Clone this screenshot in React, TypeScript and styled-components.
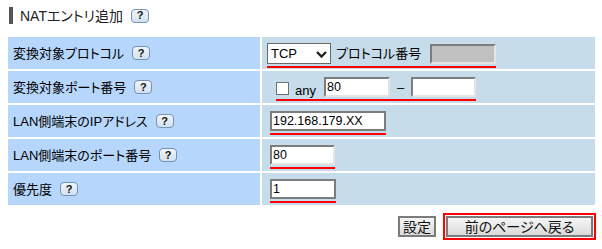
import React from 'react';
import styled, { createGlobalStyle } from 'styled-components';

const GlobalStyle = createGlobalStyle`
  body {
    margin: 0;
    background: #fff;
    color: #000;
    font-family: "Liberation Sans", "Noto Sans CJK JP", sans-serif;
    font-feature-settings: "palt";
  }
`;

const Page = styled.div`
  width: 588px;
  padding: 7px 0 0 8px;
`;

const Title = styled.h2`
  display: flex;
  align-items: center;
  gap: 8px;
  height: 17px;
  margin: 0 0 13px 1px;
  padding-left: 7px;
  border-left: 4px solid #555;
  font-size: 14px;
  font-weight: normal;
  color: #222;
  line-height: 1;
`;

const Help = styled.span`
  display: inline-flex;
  align-items: center;
  justify-content: center;
  box-sizing: border-box;
  width: 18px;
  height: 14px;
  border: 1px solid #7693b6;
  border-radius: 4px;
  background: linear-gradient(#f0f5fa, #d3e1ef);
  font: bold 11px "Liberation Sans", sans-serif;
  color: #111;
  line-height: 1;
`;

const Form = styled.div`
  display: grid;
  grid-template-columns: 252px 1fr;
  grid-auto-rows: 32px;
  gap: 2px;
  width: 587px;
`;

const LabelCell = styled.div`
  display: flex;
  align-items: center;
  gap: 8px;
  padding-left: 5px;
  background: #b6d6fb;
  font-size: 13px;
  line-height: 1;
`;

const ValueCell = styled.div`
  display: flex;
  align-items: flex-start;
  padding: 6px 0 0 5px;
  background: #c7dcea;
  font-size: 13px;
`;

const Mark = styled.div<{ $indent?: number }>`
  display: inline-flex;
  align-items: center;
  padding-bottom: 2px;
  margin-left: ${p => p.$indent ?? 0}px;
  border-bottom: 2px solid #f00;
`;

const SelectWrap = styled.div`
  position: relative;
  width: 64px;
  height: 21px;
`;

const Select = styled.select`
  appearance: none;
  box-sizing: border-box;
  width: 100%;
  height: 100%;
  margin: 0;
  padding: 0 0 0 3px;
  border: 1px solid #6a6a6a;
  border-radius: 0;
  background: #fff;
  font: 13px "Liberation Sans", sans-serif;
  color: #000;
`;

const Chevron = styled.svg`
  position: absolute;
  right: 4px;
  top: 8px;
  pointer-events: none;
`;

const Field = styled.input<{ $w: number; $look?: 'inset' | 'solid' | 'off' }>`
  box-sizing: border-box;
  width: ${p => p.$w}px;
  height: 20px;
  margin: 0;
  padding: 0 1px;
  font: 12.5px "Liberation Sans", sans-serif;
  color: #000;
  background: ${p => (p.$look === 'off' ? '#c0c0c0' : '#fff')};
  border: 2px solid #7d7d7d;
  ${p =>
    p.$look !== 'solid' &&
    `border-right-color: #e4e4e4; border-bottom-color: #e4e4e4;`}
  outline: none;
`;

const Text = styled.span<{ $gap?: number }>`
  margin: 0 ${p => p.$gap ?? 0}px;
  line-height: 1;
`;

const Box = styled.span`
  box-sizing: border-box;
  width: 13px;
  height: 13px;
  margin-top: 3px;
  border: 1px solid #707070;
  background: #fff;
`;

const Any = styled.span`
  margin: 6px 8px 0 6px;
  line-height: 1;
`;

const Buttons = styled.div`
  display: flex;
  justify-content: flex-end;
  align-items: center;
  gap: 7px;
  margin-top: 8px;
`;

const Button = styled.button<{ $w: number }>`
  box-sizing: border-box;
  width: ${p => p.$w}px;
  height: 21px;
  padding: 0;
  border: 2px solid #7b7b7b;
  background: linear-gradient(#f6f6f6, #dadada);
  font: 14px "Liberation Sans", "Noto Sans CJK JP", sans-serif;
  font-feature-settings: "palt";
  color: #111;
  line-height: 1;
`;

const RedFrame = styled.div`
  display: flex;
  padding: 1px;
  border: 2px solid #f00;
`;

const Label: React.FC<{ text: string }> = ({ text }) => (
  <LabelCell>
    {text}
    <Help>?</Help>
  </LabelCell>
);

export default function App() {
  return (
    <Page>
      <GlobalStyle />
      <Title>
        NATエントリ追加
        <Help>?</Help>
      </Title>
      <Form>
        <Label text="変換対象プロトコル" />
        <ValueCell>
          <Mark>
            <SelectWrap>
              <Select defaultValue="TCP">
                <option>TCP</option>
                <option>UDP</option>
              </Select>
              <Chevron width="11" height="7" viewBox="0 0 11 7">
                <path d="M1 1 L5.5 5.5 L10 1" fill="none" stroke="#222" strokeWidth="2.4" />
              </Chevron>
            </SelectWrap>
            <Text $gap={5}>プロトコル番号</Text>
            <Field $w={66} $look="off" disabled style={{ marginLeft: 4 }} />
          </Mark>
        </ValueCell>

        <Label text="変換対象ポート番号" />
        <ValueCell>
          <Mark $indent={9}>
            <Box />
            <Any>any</Any>
            <Field $w={66} defaultValue="80" />
            <Text $gap={7}>–</Text>
            <Field $w={65} />
          </Mark>
        </ValueCell>

        <Label text="LAN側端末のIPアドレス" />
        <ValueCell>
          <Mark $indent={3}>
            <Field $w={116} $look="solid" defaultValue="192.168.179.XX" />
          </Mark>
        </ValueCell>

        <Label text="LAN側端末のポート番号" />
        <ValueCell>
          <Mark $indent={3}>
            <Field $w={65} defaultValue="80" />
          </Mark>
        </ValueCell>

        <Label text="優先度" />
        <ValueCell>
          <Mark $indent={3}>
            <Field $w={66} $look="solid" defaultValue="1" />
          </Mark>
        </ValueCell>
      </Form>
      <Buttons>
        <Button $w={38}>設定</Button>
        <RedFrame>
          <Button $w={147}>前のページへ戻る</Button>
        </RedFrame>
      </Buttons>
    </Page>
  );
}
